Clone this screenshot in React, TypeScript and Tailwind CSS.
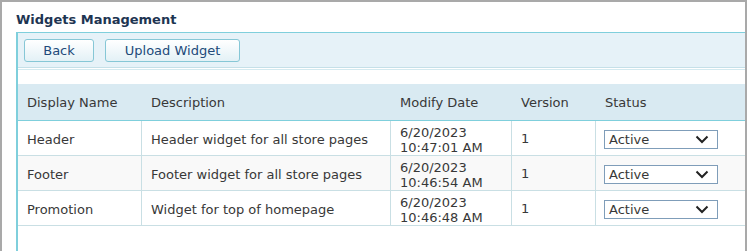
import React from "react";

const rows = [
  { name: "Header", desc: "Header widget for all store pages", d1: "6/20/2023", d2: "10:47:01 AM", v: "1" },
  { name: "Footer", desc: "Footer widget for all store pages", d1: "6/20/2023", d2: "10:46:54 AM", v: "1" },
  { name: "Promotion", desc: "Widget for top of homepage", d1: "6/20/2023", d2: "10:46:48 AM", v: "1" },
];

function Chevron() {
  return (
    <svg width="14" height="9" viewBox="0 0 14 9" className="shrink-0">
      <path d="M1.5 1.5 L7 7 L12.5 1.5" fill="none" stroke="#222" strokeWidth="2" />
    </svg>
  );
}

export default function App() {
  return (
    <div
      className="w-[747px] h-[251px] bg-white border-l-2 border-t-2 border-r-2 border-[#a9a9a9] text-[12px] text-[#383838]"
      style={{ fontFamily: '"DejaVu Sans", Verdana, sans-serif' }}
    >
      <div className="pl-[14px] pt-[8px] h-[30px] font-bold text-[13px] text-[#1e3552]">Widgets Management</div>
      <div className="ml-[14px] border-l-2 border-t border-[#7fcfdc] h-[219px]">
        <div className="bg-[#e6f2f8] h-[34px] flex items-center gap-[11px] pl-[6px] pt-[1px]">
          <button className="w-[70px] h-[23px] rounded-[3px] border border-[#86c7d6] bg-gradient-to-b from-white to-[#e3f1f6] text-[#214a7a] text-[13px]">
            Back
          </button>
          <button className="w-[135px] h-[23px] rounded-[3px] border border-[#86c7d6] bg-gradient-to-b from-white to-[#e3f1f6] text-[#214a7a] text-[13px]">
            Upload Widget
          </button>
        </div>
        <div className="h-px bg-[#c5e0e8]" />
        <div className="h-px bg-white" />
        <div className="h-px bg-[#d3eaf0]" />
        <div className="h-[14px]" />
        <div className="grid grid-cols-[124px_249px_121px_84px_1fr] text-[13px]">
          <div className="bg-[#d9eaf2] h-[37px] flex items-center pl-[9px] pt-[2px] border-b border-[#7fcfdc]">Display Name</div>
          <div className="bg-[#d9eaf2] h-[37px] flex items-center pl-[9px] pt-[2px] border-b border-[#7fcfdc]">Description</div>
          <div className="bg-[#d9eaf2] h-[37px] flex items-center pl-[9px] pt-[2px] border-b border-[#7fcfdc]">Modify Date</div>
          <div className="bg-[#d9eaf2] h-[37px] flex items-center pl-[9px] pt-[2px] border-b border-[#7fcfdc]">Version</div>
          <div className="bg-[#d9eaf2] h-[37px] flex items-center pl-[9px] pt-[2px] border-b border-[#7fcfdc]">Status</div>
          {rows.map((r, i) => {
            const bg = i === 1 ? "bg-[#f9f9f9]" : "bg-white";
            return (
              <React.Fragment key={r.name}>
                <div className={`${bg} h-[35px] flex items-center pl-[9px] pt-[4px] border-b border-r border-[#c9dfe4]`}>{r.name}</div>
                <div className={`${bg} h-[35px] flex items-center pl-[9px] pt-[4px] border-b border-r border-[#c9dfe4]`}>{r.desc}</div>
                <div className={`${bg} h-[35px] flex flex-col justify-center pl-[9px] pt-[4px] leading-[15px] border-b border-r border-[#c9dfe4]`}>
                  <span>{r.d1}</span>
                  <span>{r.d2}</span>
                </div>
                <div className={`${bg} h-[35px] flex items-center pl-[9px] pt-[1px] border-b border-r border-[#c9dfe4]`}>{r.v}</div>
                <div className={`${bg} h-[35px] flex items-center pl-[8px] pt-[3px] border-b border-[#c9dfe4]`}>
                  <div className="w-[114px] h-[19px] border border-[#7f9db9] bg-white flex items-center justify-between pl-[4px] pr-[8px]">
                    <span>Active</span>
                    <Chevron />
                  </div>
                </div>
              </React.Fragment>
            );
          })}
        </div>
      </div>
    </div>
  );
}
